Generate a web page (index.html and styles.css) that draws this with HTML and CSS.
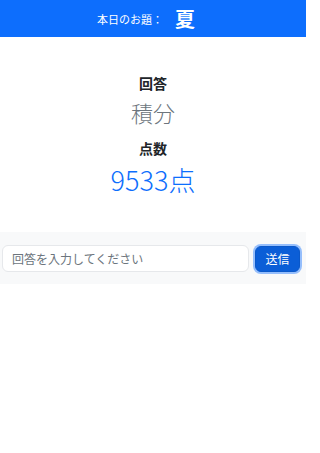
FILE: index.html
```html
<!DOCTYPE html>
<html lang="ja">
<head>
<meta charset="utf-8">
<link rel="stylesheet" href="styles.css">
</head>
<body>
<header class="topbar">
  <span class="topic-label">本日のお題：</span><span class="topic">夏</span>
</header>
<main class="result">
  <div class="label">回答</div>
  <div class="answer">積分</div>
  <div class="label label-score">点数</div>
  <div class="score">9533点</div>
</main>
<form class="answer-form" onsubmit="return false;">
  <input class="answer-input" type="text" placeholder="回答を入力してください">
  <button class="send-btn" type="button">送信</button>
</form>
</body>
</html>
```

FILE: styles.css
```css
html, body {
  margin: 0;
  padding: 0;
  background: #ffffff;
}
body {
  width: 306px;
  font-family: "Noto Sans CJK JP", "Noto Sans", sans-serif;
  color: #212529;
}
.topbar {
  height: 37px;
  background: #0d6efd;
  color: #ffffff;
  display: flex;
  align-items: center;
  justify-content: center;
  padding-right: 14px;
}
.topic-label {
  font-size: 11px;
  line-height: 16px;
}
.topic {
  font-size: 20px;
  font-weight: 700;
  line-height: 24px;
  margin-left: 12px;
}
.result {
  display: flex;
  flex-direction: column;
  align-items: center;
  padding-top: 36px;
  padding-bottom: 34px;
}
.label {
  font-size: 14px;
  font-weight: 700;
  line-height: 20px;
  color: #212529;
}
.answer {
  font-size: 22px;
  font-weight: 300;
  line-height: 30px;
  margin-top: 4px;
  color: #6c757d;
}
.label-score {
  margin-top: 11px;
}
.score {
  font-size: 27px;
  font-weight: 300;
  line-height: 36px;
  margin-top: 4px;
  color: #0d6efd;
}
.answer-form {
  background: #f8f9fa;
  display: flex;
  align-items: center;
  gap: 6px;
  padding: 13px 6px 12px 2px;
}
.answer-input {
  flex: 1;
  min-width: 0;
  box-sizing: border-box;
  height: 27px;
  border: 1px solid #e6e8eb;
  border-radius: 6px;
  background: #ffffff;
  padding: 0 9px;
  font-family: inherit;
  font-size: 12px;
  color: #212529;
  outline: none;
}
.answer-input::placeholder {
  color: #6c757d;
}
.send-btn {
  box-sizing: border-box;
  width: 45px;
  height: 26px;
  border: 1px solid #0a58ca;
  border-radius: 6px;
  background: #0b5ed7;
  color: #ffffff;
  font-family: inherit;
  font-size: 12px;
  padding: 0;
  box-shadow: 0 0 0 2px rgba(49, 132, 253, 0.5);
}
```
